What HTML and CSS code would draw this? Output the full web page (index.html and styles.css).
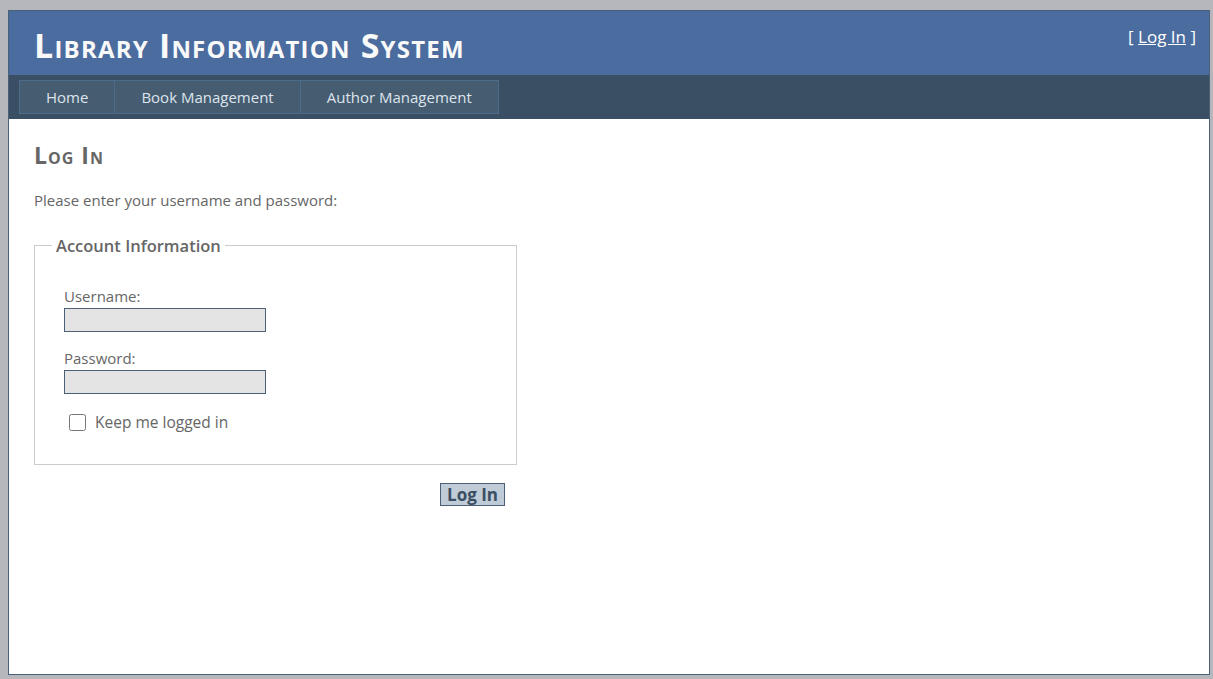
FILE: index.html
```html
<!DOCTYPE html>
<html lang="en">
<head>
    <meta charset="UTF-8">
    <meta name="viewport" content="width=device-width, initial-scale=1.0">
    <title>Log In - Library Information System</title>
    <link rel="stylesheet" href="styles.css">
</head>
<body>
    <div class="page">
        <div class="header">
            <div class="title">
                <h1>Library Information System</h1>
            </div>
            <div class="login-display">
                [ <a href="#" class="login-link">Log In</a> ]
            </div>
        </div>
        <div class="menu-bar">
            <ul class="menu">
                <li><a href="#">Home</a></li>
                <li><a href="#">Book Management</a></li>
                <li><a href="#">Author Management</a></li>
            </ul>
        </div>
        <div class="main">
            <h2>Log In</h2>
            <p class="intro">Please enter your username and password:</p>
            <div class="account-info">
                <fieldset class="login">
                    <legend>Account Information</legend>
                    <p class="field">
                        <label for="username">Username:</label>
                        <input type="text" id="username" class="text-entry">
                    </p>
                    <p class="field">
                        <label for="password">Password:</label>
                        <input type="password" id="password" class="text-entry">
                    </p>
                    <p class="remember">
                        <input type="checkbox" id="rememberMe" class="checkbox">
                        <label for="rememberMe" class="inline">Keep me logged in</label>
                    </p>
                </fieldset>
                <div class="submit-button">
                    <button type="button" class="login-button">Log In</button>
                </div>
            </div>
        </div>
    </div>
</body>
</html>
```

FILE: styles.css
```css
body {
    font-family: "Open Sans", "Noto Sans", Arial, sans-serif;
    font-size: 15px;
    color: #666666;
    background-color: #b6b7bc;
    margin: 0;
    padding: 10px 3px 0 8px;
}
.page {
    background-color: #fff;
    border: 1px solid #496077;
    height: 663px;
    display: flex;
    flex-direction: column;
}
.header {
    background-color: #4b6c9e;
    height: 64px;
    display: flex;
    justify-content: space-between;
    align-items: flex-start;
}
.header h1 {
    margin: 0;
    padding: 14px 0 0 25px;
    font-size: 34px;
    font-weight: 700;
    font-variant: small-caps;
    color: #f9f9f9;
    line-height: 40px;
    letter-spacing: 1.2px;
}
.login-display {
    color: #fff;
    font-size: 17px;
    padding: 14px 13px 0 0;
    line-height: 24px;
}
.login-link {
    color: #fff;
}
.menu-bar {
    background-color: #3a4f63;
    height: 44px;
    padding: 5px 0 0 10px;
    box-sizing: border-box;
}
.menu {
    list-style: none;
    margin: 0;
    padding: 0;
    display: flex;
}
.menu li a {
    display: block;
    background-color: #465c71;
    border: 1px solid #4c6c8b;
    border-left: none;
    color: #dde4ec;
    text-decoration: none;
    line-height: 32px;
    padding: 0 26px;
    font-size: 15px;
}
.menu li:first-child a {
    border-left: 1px solid #4c6c8b;
}
.main {
    flex: 1;
    padding: 0 25px;
}
.main h2 {
    margin: 21px 0 0;
    font-size: 23px;
    font-weight: 700;
    font-variant: small-caps;
    color: #666666;
    line-height: 30px;
    letter-spacing: 1px;
}
.intro {
    margin: 19px 0 0;
    line-height: 22px;
}
.account-info {
    width: 483px;
}
.login {
    margin: 23px 0 0;
    border: 1px solid #cccccc;
    padding: 28px 29px 31px;
}
.login legend {
    font-size: 16.5px;
    font-weight: 600;
    padding: 0 4px;
    margin-left: -12px;
    color: #666666;
}
.field {
    margin: 0 0 15px;
}
.field label {
    display: block;
    line-height: 23px;
}
.text-entry {
    display: block;
    width: 202px;
    height: 24px;
    box-sizing: border-box;
    margin: 0;
    background-color: #e4e4e4;
    border: 1px solid #4b6077;
}
.remember {
    margin: 0;
    padding-top: 2px;
    display: flex;
    align-items: center;
    line-height: 22px;
    font-size: 15.5px;
}
.checkbox {
    width: 17px;
    height: 17px;
    margin: 0 9px 0 5px;
}
.submit-button {
    text-align: right;
    padding: 18px 12px 0 0;
}
.login-button {
    font-family: "Open Sans", "Noto Sans", Arial, sans-serif;
    font-size: 17px;
    font-weight: 700;
    color: #3a4f63;
    background-color: #bfcbd6;
    border: 1px solid #4b6077;
    height: 23px;
    padding: 0 6px;
    line-height: 19px;
}
```
